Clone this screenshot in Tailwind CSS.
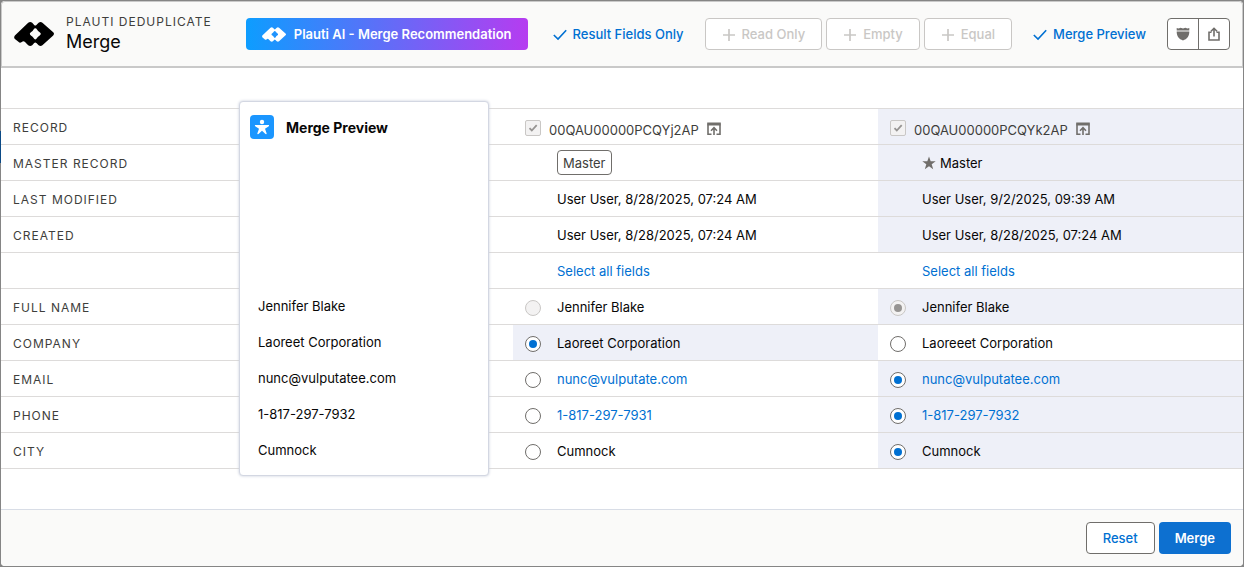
<!DOCTYPE html>
<html lang="en">
<head>
  <meta charset="UTF-8" />
  <meta name="viewport" content="width=device-width, initial-scale=1.0"/>
  <title>Merge</title>
  <script src="https://cdn.jsdelivr.net/npm/@tailwindcss/browser@4"></script>
</head>

<body class="min-h-screen flex flex-col p-px bg-[#858585] font-[Inter,sans-serif] text-[13px] leading-5 text-[#080707]">
  <!-- Icons -->
  <svg class="hidden">
    <symbol id="logo" viewBox="0 0 40 24">
      <path fill-rule="evenodd" d="M14.200.8Q16.200-.8 18.200.8L20.200 3Q21.300 4 22.400 3L24.600.8Q26.600-.8 28.400.8L39.200 10.200Q40.800 11.800 39.200 13.400L28.400 23.200Q26.600 24.800 24.600 23.200L22.400 21Q21.300 20 20.200 21L18.200 23.200Q16.200 24.800 14.200 23.200L11 20Q9.800 18.800 8.600 19.400L7.400 20.300Q5.800 21.200 4.400 19.800L.9 17Q-.6 15.200.9 13.400ZM21.300 6.200Q20.300 6.200 19.600 7.600Q18.700 9.200 17.200 9.900Q15.800 10.700 15.800 11.800Q15.800 12.900 17.200 13.700Q18.700 14.500 19.600 16.100Q20.300 17.500 21.300 17.500Q22.300 17.500 23 16.100Q23.900 14.500 25.400 13.700Q26.800 12.900 26.800 11.800Q26.800 10.700 25.400 9.900Q23.900 9.200 23 7.600Q22.300 6.200 21.300 6.200Z" fill="currentColor"/>
    </symbol>
    <symbol id="check" viewBox="0 0 14 14">
      <path d="M.8 8L5 12.100 13.200 3.200" fill="none" stroke="currentColor" stroke-width="1.600"/>
    </symbol>
    <symbol id="plus" viewBox="0 0 14 14">
      <path d="M7 2V14M1 8H13" fill="none" stroke="currentColor" stroke-width="1.700"/>
    </symbol>
    <symbol id="open" viewBox="0 0 14 14">
      <path d="M4.500 12.200H1V1.200H13V12.200H9.500" fill="none" stroke="currentColor" stroke-width="1.600"/>
      <path d="M.5 2.500H13.500" stroke="currentColor" stroke-width="2"/>
      <path d="M7 13V6.500M4 8.700L7 5.700 10 8.700" fill="none" stroke="currentColor" stroke-width="1.600"/>
    </symbol>
    <symbol id="tick" viewBox="0 0 10 10">
      <path d="M1.500 5.200L3.800 7.500 8.700 2.200" fill="none" stroke="currentColor" stroke-width="1.800"/>
    </symbol>
  </svg>

  <!-- Edge of the page behind the dialog -->
  <div class="absolute left-0 top-[131px] w-px h-8 bg-[#0b4a86]"></div>

  <div class="flex-1 flex flex-col bg-white rounded overflow-hidden">
    <!-- Header -->
    <header class="flex items-center justify-between gap-4 h-[67px] pl-3 pr-3 bg-[#fafaf9] border border-b-2 border-[#c9c9c9] rounded-t">
      <div class="flex items-center gap-3">
        <svg class="w-10 h-6 text-black"><use href="#logo"/></svg>
        <div class="pb-1">
          <p class="text-xs leading-5 tracking-[1px] text-[#3e3e3c] whitespace-nowrap">PLAUTI DEDUPLICATE</p>
          <h1 class="text-lg leading-5">Merge</h1>
        </div>
      </div>
      <div class="flex items-center gap-1 font-medium whitespace-nowrap">
        <button class="flex items-center gap-2 h-8 px-4 mr-1 rounded text-white font-semibold bg-linear-to-r/srgb from-[#0d9dff] to-[#b63cf0]">
          <svg class="w-6 h-[15px]"><use href="#logo"/></svg>Plauti AI - Merge Recommendation
        </button>
        <button class="flex items-center gap-1.5 h-8 px-4 border border-transparent rounded text-[#0070d2]">
          <svg class="size-3.5"><use href="#check"/></svg>Result Fields Only
        </button>
        <button class="flex items-center gap-1.5 h-8 px-4 border border-[#c9c7c5] rounded bg-white text-[#c9c7c5]" disabled>
          <svg class="size-3.5"><use href="#plus"/></svg>Read Only
        </button>
        <button class="flex items-center gap-1.5 h-8 px-4 border border-[#c9c7c5] rounded bg-white text-[#c9c7c5]" disabled>
          <svg class="size-3.5"><use href="#plus"/></svg>Empty
        </button>
        <button class="flex items-center gap-1.5 h-8 px-4 border border-[#c9c7c5] rounded bg-white text-[#c9c7c5]" disabled>
          <svg class="size-3.5"><use href="#plus"/></svg>Equal
        </button>
        <button class="flex items-center gap-1.5 h-8 px-4 border border-transparent rounded text-[#0070d2]">
          <svg class="size-3.5"><use href="#check"/></svg>Merge Preview
        </button>
        <div class="flex h-8 border border-[#706e6b] rounded bg-white text-[#706e6b]">
          <button class="w-[31px] grid place-content-center border-r border-[#706e6b]" aria-label="Shield">
            <svg class="size-3.5" viewBox="0 0 14 14" fill="currentColor"><path d="M.7 1L2.500 1.500 4.700.8 7 1.500 9.300.8 11.500 1.500 13.300 1V3.600H.7ZM.7 4.600H13.300C13.500 9 11 12.500 7 13.400C3 12.500.5 9 .7 4.600Z"/></svg>
          </button>
          <button class="w-[30px] grid place-content-center" aria-label="Share">
            <svg class="size-3.5" viewBox="0 0 14 14" fill="none" stroke="currentColor" stroke-width="1.600"><path d="M4.500 5.200H2V13H12V5.200H9.500M7 9.500V1.500M4 4.300L7 1.300 10 4.300"/></svg>
          </button>
        </div>
      </div>
    </header>

    <!-- Records -->
    <main class="relative flex-1 py-10">
      <table class="w-full table-fixed border-separate border-spacing-0 border-t border-[#dddbda] text-left whitespace-nowrap [&_th]:h-9 [&_td]:h-9 [&_th]:border-b [&_td]:border-b [&_th]:border-[#dddbda] [&_td]:border-[#dddbda] [&_th]:pl-3 [&_th]:pt-0.5 [&_th]:text-xs [&_th]:font-normal [&_th]:tracking-[1px] [&_th]:text-[#3e3e3c] [&_td]:pl-11 [&_input]:mt-0.5">
        <colgroup>
          <col class="w-[238px]"><col class="w-[274px]"><col><col>
        </colgroup>
        <tbody>
          <tr>
            <th scope="row">RECORD</th><td></td>
            <td>
              <div class="-ml-8 flex items-center text-[#3e3e3c]">
                <label class="flex items-center gap-2">
                  <span class="grid place-items-center">
                    <input type="checkbox" checked disabled class="appearance-none size-4 col-start-1 row-start-1 border border-[#c9c7c5] rounded-xs bg-[#f3f2f2]">
                    <svg class="size-2.5 col-start-1 row-start-1 mt-0.5 text-[#969492]"><use href="#tick"/></svg>
                  </span>
                  <span class="pt-1.5">00QAU00000PCQYj2AP</span>
                </label>
                <a href="#" class="ml-2 pt-1 text-[#706e6b]" aria-label="Open record"><svg class="size-3.5"><use href="#open"/></svg></a>
              </div>
            </td>
            <td class="bg-[#eef0f8]">
              <div class="-ml-8 flex items-center text-[#3e3e3c]">
                <label class="flex items-center gap-2">
                  <span class="grid place-items-center">
                    <input type="checkbox" checked disabled class="appearance-none size-4 col-start-1 row-start-1 border border-[#c9c7c5] rounded-xs bg-[#f3f2f2]">
                    <svg class="size-2.5 col-start-1 row-start-1 mt-0.5 text-[#969492]"><use href="#tick"/></svg>
                  </span>
                  <span class="pt-1.5">00QAU00000PCQYk2AP</span>
                </label>
                <a href="#" class="ml-2 pt-1 text-[#706e6b]" aria-label="Open record"><svg class="size-3.5"><use href="#open"/></svg></a>
              </div>
            </td>
          </tr>
          <tr>
            <th scope="row">MASTER RECORD</th><td></td>
            <td><button class="block h-[25px] px-[5px] border border-[#706e6b] rounded bg-white text-[#3e3e3c]">Master</button></td>
            <td class="bg-[#eef0f8]">
              <div class="flex items-center gap-1">
                <svg class="size-3.5" viewBox="0 0 14 14" fill="#706e6b"><path d="M7 .5L8.700 5.200H13.700L9.700 8.200 11.200 13.300 7 10.300 2.800 13.300 4.300 8.200.3 5.200H5.300Z"/></svg>
                Master
              </div>
            </td>
          </tr>
          <tr>
            <th scope="row">LAST MODIFIED</th><td></td>
            <td>User User, 8/28/2025, 07:24 AM</td>
            <td class="bg-[#eef0f8]">User User, 9/2/2025, 09:39 AM</td>
          </tr>
          <tr>
            <th scope="row">CREATED</th><td></td>
            <td>User User, 8/28/2025, 07:24 AM</td>
            <td class="bg-[#eef0f8]">User User, 8/28/2025, 07:24 AM</td>
          </tr>
          <tr>
            <td></td><td></td>
            <td><a href="#" class="text-[#0070d2]">Select all fields</a></td>
            <td><a href="#" class="text-[#0070d2]">Select all fields</a></td>
          </tr>
          <tr>
            <th scope="row">FULL NAME</th><td></td>
            <td>
              <label class="-ml-8 flex items-center gap-4">
                <input type="radio" name="name" disabled class="appearance-none size-4 rounded-full border border-[#c9c7c5] bg-[#f3f2f2]">
                Jennifer Blake
              </label>
            </td>
            <td class="bg-[#eef0f8]">
              <label class="-ml-8 flex items-center gap-4">
                <input type="radio" name="name" checked disabled class="appearance-none size-4 grid place-content-center rounded-full border border-[#c9c7c5] bg-[#f3f2f2] before:size-2 before:rounded-full before:bg-[#969492]">
                Jennifer Blake
              </label>
            </td>
          </tr>
          <tr>
            <th scope="row">COMPANY</th><td></td>
            <td class="bg-[#eef0f8]">
              <label class="-ml-8 flex items-center gap-4">
                <input type="radio" name="company" checked class="appearance-none size-4 grid place-content-center rounded-full border border-[#706e6b] bg-white before:size-2 before:rounded-full checked:before:bg-[#0070d2]">
                Laoreet Corporation
              </label>
            </td>
            <td>
              <label class="-ml-8 flex items-center gap-4">
                <input type="radio" name="company" class="appearance-none size-4 grid place-content-center rounded-full border border-[#706e6b] bg-white before:size-2 before:rounded-full checked:before:bg-[#0070d2]">
                Laoreeet Corporation
              </label>
            </td>
          </tr>
          <tr>
            <th scope="row">EMAIL</th><td></td>
            <td>
              <div class="-ml-8 flex items-center gap-4">
                <input type="radio" name="email" aria-labelledby="email1" class="appearance-none size-4 grid place-content-center rounded-full border border-[#706e6b] bg-white before:size-2 before:rounded-full checked:before:bg-[#0070d2]">
                <a id="email1" href="mailto:nunc@vulputate.com" class="text-[#0070d2]">nunc@vulputate.com</a>
              </div>
            </td>
            <td class="bg-[#eef0f8]">
              <div class="-ml-8 flex items-center gap-4">
                <input type="radio" name="email" checked aria-labelledby="email2" class="appearance-none size-4 grid place-content-center rounded-full border border-[#706e6b] bg-white before:size-2 before:rounded-full checked:before:bg-[#0070d2]">
                <a id="email2" href="mailto:nunc@vulputatee.com" class="text-[#0070d2]">nunc@vulputatee.com</a>
              </div>
            </td>
          </tr>
          <tr>
            <th scope="row">PHONE</th><td></td>
            <td>
              <div class="-ml-8 flex items-center gap-4">
                <input type="radio" name="phone" aria-labelledby="phone1" class="appearance-none size-4 grid place-content-center rounded-full border border-[#706e6b] bg-white before:size-2 before:rounded-full checked:before:bg-[#0070d2]">
                <a id="phone1" href="tel:18172977931" class="text-[#0070d2]">1-817-297-7931</a>
              </div>
            </td>
            <td class="bg-[#eef0f8]">
              <div class="-ml-8 flex items-center gap-4">
                <input type="radio" name="phone" checked aria-labelledby="phone2" class="appearance-none size-4 grid place-content-center rounded-full border border-[#706e6b] bg-white before:size-2 before:rounded-full checked:before:bg-[#0070d2]">
                <a id="phone2" href="tel:18172977932" class="text-[#0070d2]">1-817-297-7932</a>
              </div>
            </td>
          </tr>
          <tr>
            <th scope="row">CITY</th><td></td>
            <td>
              <label class="-ml-8 flex items-center gap-4">
                <input type="radio" name="city" class="appearance-none size-4 grid place-content-center rounded-full border border-[#706e6b] bg-white before:size-2 before:rounded-full checked:before:bg-[#0070d2]">
                Cumnock
              </label>
            </td>
            <td class="bg-[#eef0f8]">
              <label class="-ml-8 flex items-center gap-4">
                <input type="radio" name="city" checked class="appearance-none size-4 grid place-content-center rounded-full border border-[#706e6b] bg-white before:size-2 before:rounded-full checked:before:bg-[#0070d2]">
                Cumnock
              </label>
            </td>
          </tr>
        </tbody>
      </table>

      <!-- Merge preview card, floats over the second column -->
      <section class="absolute left-[238px] top-[33px] bottom-[33px] w-[250px] flex flex-col justify-between pb-[7px] border border-[#d3d7e2] rounded bg-white shadow-[0_0_3px_#c5cbd9]">
        <div class="flex items-center gap-3 px-2.5 pt-[13px]">
          <svg class="size-6" viewBox="0 0 24 24"><rect width="24" height="24" rx="4" fill="#1b96ff"/><circle cx="12" cy="7" r="2.200" fill="#fff"/><path d="M5.200 10H18.800Q19.500 10.500 18.800 11.200L15 13.800 16.700 18.500Q16.500 19.500 15.500 19L12 15.800 8.500 19Q7.500 19.500 7.300 18.500L9 13.800 5.200 11.200Q4.500 10.500 5.200 10Z" fill="#fff"/></svg>
          <h2 class="text-sm font-bold pt-0.5">Merge Preview</h2>
        </div>
        <ul class="pl-[18px] leading-9">
          <li>Jennifer Blake</li>
          <li>Laoreet Corporation</li>
          <li>nunc@vulputatee.com</li>
          <li>1-817-297-7932</li>
          <li>Cumnock</li>
        </ul>
      </section>
    </main>

    <!-- Footer -->
    <footer class="flex justify-end gap-1 p-3 border-t border-[#d8dde6] bg-[#fafaf9] font-medium">
      <button class="h-8 px-4 border border-[#706e6b] rounded bg-white text-[#0070d2]">Reset</button>
      <button class="h-8 px-4 rounded bg-[#0d70d0] text-white font-semibold">Merge</button>
    </footer>
  </div>
</body>
</html>
